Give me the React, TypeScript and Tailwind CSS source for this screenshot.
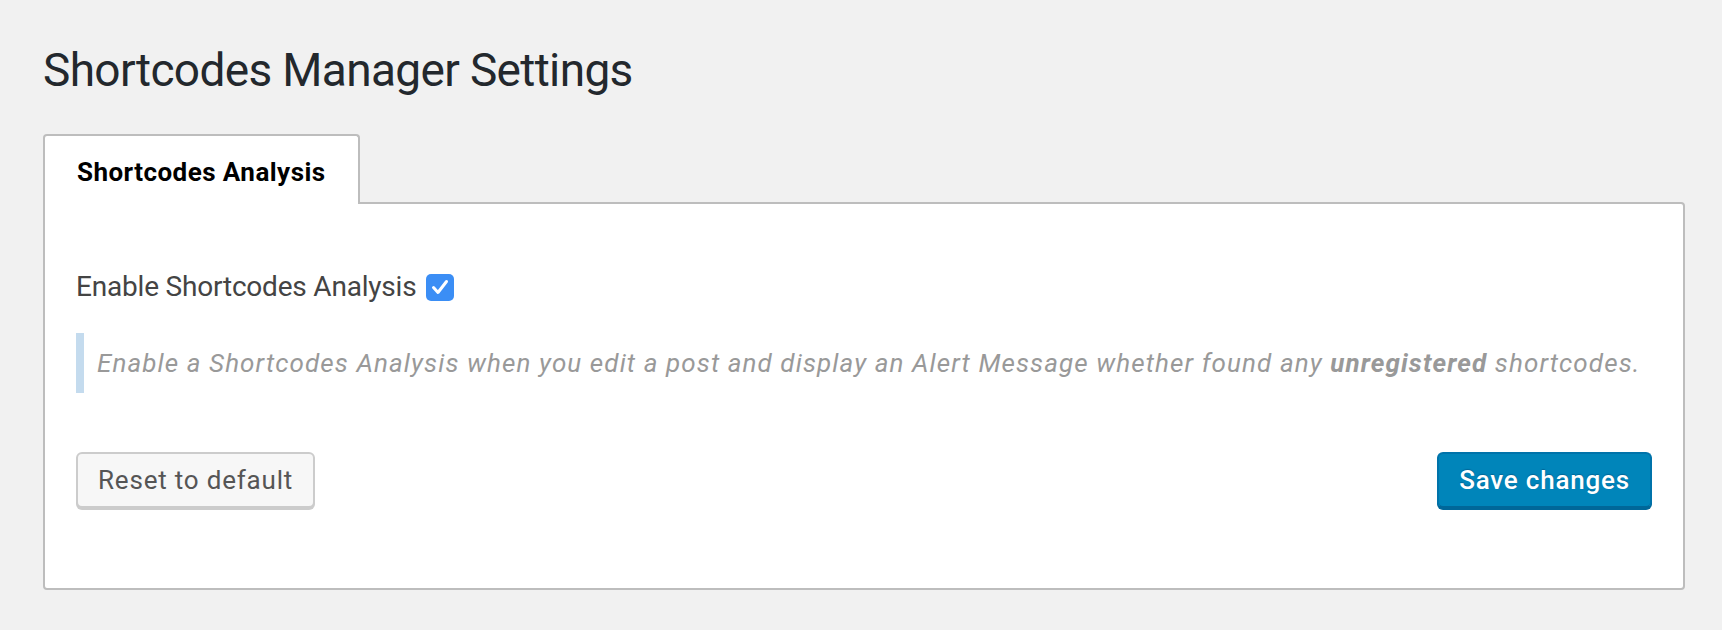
const font = "font-['Roboto','Liberation_Sans',sans-serif]";

function Checkbox() {
  return (
    <span className="inline-flex h-[27px] w-[28px] items-center justify-center rounded-[5px] bg-[#3b8ef5]">
      <svg width="18" height="16" viewBox="0 0 18 16" fill="none">
        <path d="M2.5 8.5 L7 13.5 L15.5 2.5" stroke="#fff" strokeWidth="3" strokeLinecap="round" strokeLinejoin="round" />
      </svg>
    </span>
  );
}

export default function App() {
  return (
    <div className={`min-h-[630px] bg-[#f1f1f1] pl-[43px] pr-[37px] ${font}`}>
      <h1 className="pt-[47px] text-[46px] leading-none font-normal tracking-[-0.65px] text-[#23282d]">
        Shortcodes Manager Settings
      </h1>

      {/* Tabs */}
      <div className="mt-[41px] flex">
        <div className="relative z-10 -mb-[2px] rounded-t-[4px] border-2 border-b-0 border-[#bdbdbd] bg-white px-[32px] pt-[23px] pb-[19px] text-[26px] leading-[26px] font-bold tracking-[0.45px] text-black">
          Shortcodes Analysis
        </div>
      </div>

      {/* Panel */}
      <div className="rounded-b-[4px] rounded-tr-[4px] border-2 border-[#bdbdbd] bg-white px-[31px] pt-[69px] pb-[80px]">
        <label className="flex h-[28px] items-center gap-[10px] text-[28px] leading-[28px] tracking-[-0.2px] text-[#444]">
          Enable Shortcodes Analysis
          <Checkbox />
        </label>

        <p className="mt-[32px] h-[60px] whitespace-nowrap border-l-[8px] border-[#c4dbee] pl-[13px] text-[26px] leading-[60px] italic tracking-[1.1px] text-[#999]">
          Enable a Shortcodes Analysis when you edit a post and display an Alert Message whether found any{' '}
          <strong className="font-bold">unregistered</strong> shortcodes.
        </p>

        <div className="mt-[59px] flex items-start justify-between">
          <button className="h-[56px] rounded-[6px] border-2 border-[#cccccc] bg-[#f7f7f7] px-[20px] text-[26px] leading-none tracking-[0.8px] text-[#555] shadow-[0_2px_0_#cccccc]">
            Reset to default
          </button>
          <button className="h-[56px] rounded-[6px] border-2 border-[#0073aa] border-b-[#006799] bg-[#0085ba] px-[20px] text-[26px] leading-none font-medium tracking-[0.8px] text-white shadow-[0_2px_0_#006799] [text-shadow:0_-1px_1px_#006799]">
            Save changes
          </button>
        </div>
      </div>
    </div>
  );
}
